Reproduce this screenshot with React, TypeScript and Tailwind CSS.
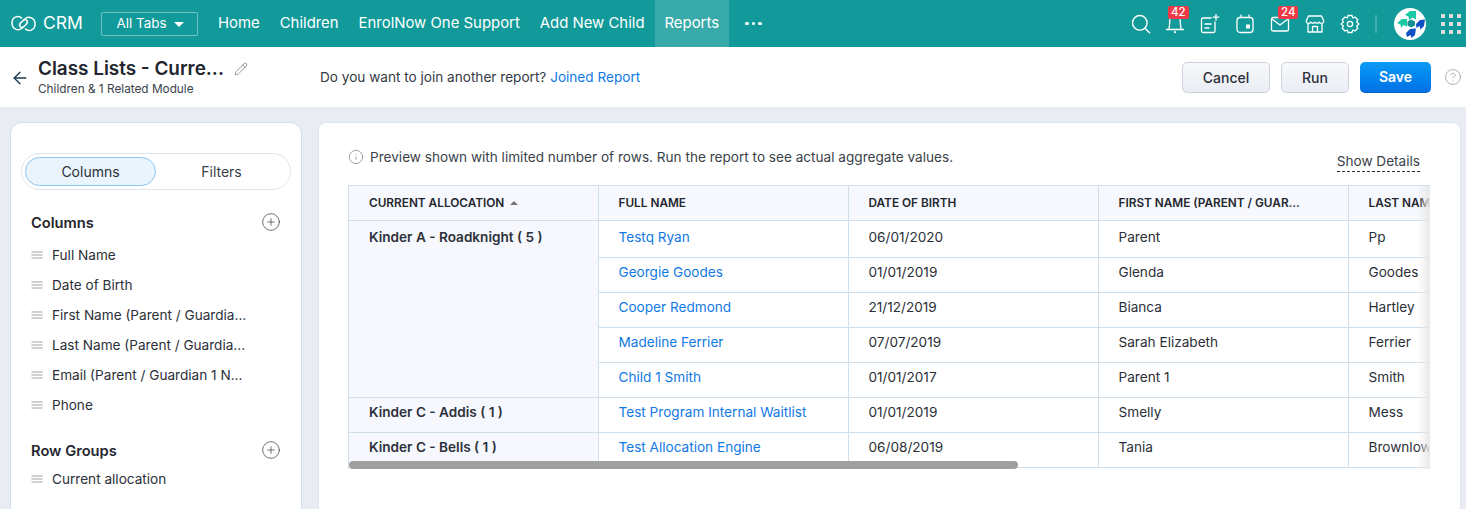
import { ArrowLeft, CirclePlus, Info, Pencil, CircleHelp } from "lucide-react";

const navLinks = ["Home", "Children", "EnrolNow One Support", "Add New Child"];
const columns = ["Full Name", "Date of Birth", "First Name (Parent / Guardia...", "Last Name (Parent / Guardia...", "Email (Parent / Guardian 1 N...", "Phone"];
const headers = ["FULL NAME", "DATE OF BIRTH", "FIRST NAME (PARENT / GUAR...", "LAST NAME"];

const rows = [
  { group: "Kinder A - Roadknight ( 5 )", span: 5, name: "Testq Ryan", dob: "06/01/2020", first: "Parent", last: "Pp" },
  { name: "Georgie Goodes", dob: "01/01/2019", first: "Glenda", last: "Goodes" },
  { name: "Cooper Redmond", dob: "21/12/2019", first: "Bianca", last: "Hartley" },
  { name: "Madeline Ferrier", dob: "07/07/2019", first: "Sarah Elizabeth", last: "Ferrier" },
  { name: "Child 1 Smith", dob: "01/01/2017", first: "Parent 1", last: "Smith" },
  { group: "Kinder C - Addis ( 1 )", span: 1, name: "Test Program Internal Waitlist", dob: "01/01/2019", first: "Smelly", last: "Mess" },
  { group: "Kinder C - Bells ( 1 )", span: 1, name: "Test Allocation Engine", dob: "06/08/2019", first: "Tania", last: "Brownlow" },
];

const CrmLogo = () => (
  <svg width="25" height="17" viewBox="0 0 25 17" fill="none" stroke="white" strokeWidth="1.5" strokeLinecap="round">
    <path d="M10.5 3 C8 0.4 1 1 1 8 C1 14.5 7.5 16 10.5 13.5 L15.5 9" />
    <path d="M14.5 14 C17 16.6 24 16 24 9 C24 2.5 17.5 1 14.5 3.5 L9.5 8" />
    <path d="M9.5 8 C7 11 10.5 14 13 11.5" />
    <path d="M15.5 9 C18 6 14.5 3 12 5.5" />
  </svg>
);

const Badge = ({ n, left }: { n: number; left: string }) => (
  <span className={`absolute -top-[8px] ${left} bg-[#ee3a46] text-white text-[11.5px] leading-[13px] px-[3px] rounded-[2px] font-medium`}>
    {n}
  </span>
);

const DragHandle = () => (
  <svg width="12" height="8" viewBox="0 0 12 8" stroke="#a3a3a3" strokeWidth="1">
    <path d="M0.5 1 H11.5 M0.5 4 H11.5 M0.5 7 H11.5" />
  </svg>
);

const TopIcons = () => (
  <div className="flex items-center text-white">
    <svg className="mr-[14px]" width="20" height="20" viewBox="0 0 20 20" fill="none" stroke="white" strokeWidth="1.4">
      <circle cx="8.8" cy="8.8" r="7.3" />
      <path d="M14 14.2 L18.6 18.8" strokeLinecap="round" />
    </svg>
    <div className="relative mr-[15px] w-[20px] h-[20px]">
      <svg width="20" height="20" viewBox="0 0 20 20" fill="none" stroke="white" strokeWidth="1.3">
        <path d="M4 15 C4.6 12 4.6 8 5 4 H15 C15.4 8 15.4 12 16 15" />
        <path d="M1.5 15.5 H18.5" strokeLinecap="round" />
        <path d="M9 18.2 H11" strokeWidth="1.8" />
      </svg>
      <Badge n={42} left="left-[3px]" />
    </div>
    <svg className="mr-[15px]" width="20" height="20" viewBox="0 0 20 20" fill="none" stroke="white" strokeWidth="1.3" strokeLinecap="round">
      <path d="M11 4 H3 A1.5 1.5 0 0 0 1.5 5.5 V17 A1.5 1.5 0 0 0 3 18.5 H13.5 A1.5 1.5 0 0 0 15 17 V8" />
      <path d="M5 10 H11 M5 14 H9" />
      <path d="M16 0.5 V6 M13.2 3.2 H18.8" />
    </svg>
    <svg className="mr-[15px]" width="20" height="20" viewBox="0 0 20 20" fill="none" stroke="white" strokeWidth="1.3" strokeLinecap="round">
      <rect x="2" y="3.5" width="16" height="15" rx="3" />
      <path d="M6 1.2 V3.5 M14 1.2 V3.5" />
      <rect x="11" y="10.5" width="4" height="4" rx="0.6" fill="white" stroke="none" />
    </svg>
    <div className="relative mr-[15px] w-[20px] h-[20px]">
      <svg width="20" height="20" viewBox="0 0 20 20" fill="none" stroke="white" strokeWidth="1.3" strokeLinejoin="round">
        <rect x="1.5" y="3.5" width="17" height="13.5" rx="1.6" />
        <path d="M2 5 L10 11 L18 5" />
      </svg>
      <Badge n={24} left="left-[8px]" />
    </div>
    <svg className="mr-[15px]" width="20" height="20" viewBox="0 0 20 20" fill="none" stroke="white" strokeWidth="1.3" strokeLinejoin="round">
      <path d="M3.5 2 H16.5 L18.8 7 A2.4 2.4 0 0 1 14.2 8 A2.4 2.4 0 0 1 10 8 A2.4 2.4 0 0 1 5.8 8 A2.4 2.4 0 0 1 1.2 7 Z" />
      <path d="M3 10 V18 H17 V10" />
      <path d="M7.5 18 V12.5 H12.5 V18" />
    </svg>
    <svg className="mr-[15px]" width="20" height="20" viewBox="0 0 20 20" fill="none" stroke="white" strokeWidth="1.3" strokeLinejoin="round">
      <path d="M8 1.5 H12 L12.8 4 L15 3 L17.8 5.8 L16.6 8 L19 10 L16.6 12 L17.8 14.2 L15 17 L12.8 16 L12 18.5 H8 L7.2 16 L5 17 L2.2 14.2 L3.4 12 L1 10 L3.4 8 L2.2 5.8 L5 3 L7.2 4 Z" />
      <circle cx="10" cy="10" r="2.6" />
    </svg>
    <div className="w-[2px] h-[18px] bg-white/20 mr-[17px]" />
    <div className="w-[32px] h-[32px] rounded-full bg-white mr-[15px] flex items-center justify-center">
      {/* pennant marks */}
      <svg width="32" height="32" viewBox="0 0 32 32">
        <path d="M11 7 L16 3 H22 V11.5 L18.5 9.5 L15 12 L14.5 8.5 Z" fill="#19c9a3" />
        <path d="M3 15 L8 11 H13 V18.5 L9.5 17 L7 20 L6.5 16.5 Z" fill="#19c9a3" />
        <path d="M13.5 13.5 L17 11.5 L21 13.5 V17.5 L17 19.5 L13.5 17.5 Z" fill="#15908f" />
        <path d="M22 16 L26 12 L31 11.5 L30 18 L26.5 21.5 L25.5 18 L22.5 20 Z" fill="#0f50c4" />
        <path d="M12 25 L16 21 L22 20.5 L21 27 L17.5 30 L16.5 27 L13 29 Z" fill="#0f50c4" />
      </svg>
    </div>
    <div className="grid grid-cols-3 gap-[4px]">
      {Array.from({ length: 9 }).map((_, i) => (
        <span key={i} className="w-[4px] h-[4px] bg-[#dcdcdc]" />
      ))}
    </div>
  </div>
);

export default function App() {
  return (
    <div className="h-[509px] overflow-hidden bg-[#e9edf3] text-[#22262f] font-['Inter','Noto_Sans',sans-serif]">
      <header className="h-[47px] bg-[#119a99] flex items-center justify-between pr-[5px] text-white">
        <div className="flex items-center h-full">
          <div className="flex items-center pl-[11px] w-[101px] gap-[7px]">
            <CrmLogo />
            <span className="text-[17.5px]">CRM</span>
          </div>
          <button className="w-[97px] h-[24px] border border-white/40 rounded-[2px] flex items-center justify-center gap-[8px] text-[13.4px] leading-[20px] pl-[2px]">
            <span className="-mt-[1px]">All Tabs</span>
            <span className="w-0 h-0 border-x-[5px] border-x-transparent border-t-[5px] border-t-white mt-[1px]" />
          </button>
          <nav className="flex items-center h-full ml-[10px] text-[14.9px]">
            {navLinks.map((l) => (
              <a key={l} className="px-[10px]">{l}</a>
            ))}
            <a className="px-[10px] h-full flex items-center bg-[#38aaa9]">Reports</a>
            <span className="ml-[16px] flex gap-[3px]">
              <i className="w-[3.5px] h-[3.5px] rounded-full bg-white" />
              <i className="w-[3.5px] h-[3.5px] rounded-full bg-white" />
              <i className="w-[3.5px] h-[3.5px] rounded-full bg-white" />
            </span>
          </nav>
        </div>
        <TopIcons />
      </header>

      <div className="h-[60px] bg-white flex items-center pl-[10px] pr-[4px]">
        <ArrowLeft size={20} strokeWidth={1.6} className="text-[#1b3a4f] mr-[8px] mt-[1px]" />
        <div className="w-[282px]">
          <div className="flex items-center gap-[10px] h-[22px]">
            <span className="text-[18.9px] font-semibold leading-[24px] text-[#23262e]">Class Lists - Curre...</span>
            <Pencil size={14} strokeWidth={1.3} className="text-[#777]" />
          </div>
          <div className="text-[11.8px] leading-[16px] text-[#3a3f4a] mt-[1px]">Children &amp; 1 Related Module</div>
        </div>
        <div className="text-[13.6px] flex-1 text-[#333a45]">
          Do you want to join another report? <a className="text-[#1179e6]">Joined Report</a>
        </div>
        <button className="w-[88px] h-[31px] rounded-[5px] border border-[#cdd2dd] bg-gradient-to-b from-[#f8f9fb] to-[#e9ecf3] text-[14px] font-medium text-[#2d313b]">Cancel</button>
        <button className="w-[68px] h-[31px] ml-[11px] rounded-[5px] border border-[#cdd2dd] bg-gradient-to-b from-[#f8f9fb] to-[#e9ecf3] text-[14px] font-medium text-[#2d313b]">Run</button>
        <button className="w-[71px] h-[31px] ml-[11px] rounded-[5px] bg-gradient-to-b from-[#0d9bf5] to-[#0470e6] border-b border-[#0563c8] text-[14px] font-semibold text-white">Save</button>
        <CircleHelp size={18} strokeWidth={1} className="text-[#9a9a9a] ml-[13px]" />
      </div>

      <main className="flex gap-[16px] pt-[15px] pl-[10px] pr-[5px]">
        <aside className="w-[292px] h-[420px] bg-white border border-[#cfe0ef] rounded-[12px] pt-[30px] px-[10px]">
          <div className="h-[37px] rounded-full border border-[#dfe5ee] flex items-center p-[3px]">
            <div className="w-[131px] h-[29px] rounded-full bg-[#e9f4fd] border border-[#8cc6f1] flex items-center justify-center text-[14px] text-[#2b2f38]">Columns</div>
            <div className="w-[131px] text-center text-[14px] text-[#3a3f4a]">Filters</div>
          </div>
          <div className="flex items-center justify-between mt-[21px] pl-[10px] pr-[10px] h-[24px]">
            <span className="text-[14.7px] font-semibold text-[#23262e]">Columns</span>
            <CirclePlus size={20} strokeWidth={0.9} className="text-[#444] -mt-[2px]" />
          </div>
          <ul className="mt-[5px] pl-[10px]">
            {columns.map((c) => (
              <li key={c} className="h-[30px] flex items-center gap-[9px] text-[13.6px] text-[#2b2f38]">
                <DragHandle />
                {c}
              </li>
            ))}
          </ul>
          <div className="flex items-center justify-between mt-[19px] pl-[10px] pr-[10px] h-[24px]">
            <span className="text-[14.7px] font-semibold text-[#23262e]">Row Groups</span>
            <CirclePlus size={20} strokeWidth={0.9} className="text-[#444] -mt-[2px]" />
          </div>
          <div className="pl-[10px] mt-[1px] h-[30px] flex items-center gap-[9px] text-[13.6px] text-[#2b2f38]">
            <DragHandle />
            Current allocation
          </div>
        </aside>

        <section className="flex-1 h-[420px] bg-white border border-[#dde6ef] rounded-[8px] pl-[29px] pr-[30px]">
          <div className="h-[62px] flex justify-between">
            <div className="flex items-center gap-[6px] h-[16px] mt-[26px] text-[13.6px] text-[#3a3f4a]">
              <Info size={16} strokeWidth={1} className="text-[#777]" />
              Preview shown with limited number of rows. Run the report to see actual aggregate values.
            </div>
            <span className="h-[21px] mt-[28px] mr-[10px] text-[13.6px] leading-[20px] text-[#3a3f4a] border-b border-dashed border-[#333]">Show Details</span>
          </div>
          <div className="relative w-[1082px] h-[284px] overflow-hidden border-l border-t border-[#cfe0ec]">
            <table className="w-[1348px] table-fixed border-collapse text-[13.6px]">
              <colgroup>
                <col className="w-[249px]" />
                <col className="w-[250px]" />
                <col className="w-[250px]" />
                <col className="w-[250px]" />
                <col className="w-[349px]" />
              </colgroup>
              <thead>
                <tr className="h-[34px] bg-[#f6f8fe] border-b border-[#cfe0ec]">
                  <th className="pl-[20px] pt-[2px] text-left text-[11.8px] font-semibold text-[#23262e] border-r border-[#cfe0ec]">
                    CURRENT ALLOCATION
                    <span className="inline-block ml-[6px] mb-[2px] w-0 h-0 border-x-[4px] border-x-transparent border-b-[4px] border-b-[#777]" />
                  </th>
                  {headers.map((h) => (
                    <th key={h} className="pl-[20px] pt-[2px] text-left text-[11.8px] font-semibold text-[#23262e] border-r border-[#cfe0ec] whitespace-nowrap">{h}</th>
                  ))}
                </tr>
              </thead>
              <tbody>
                {rows.map((r, i) => {
                  const cell = i === 0 ? "align-top pt-[6px] pl-[20px] leading-[20px]" : "align-top pt-[4px] pl-[20px] leading-[20px]";
                  return (
                    <tr key={r.name} className={i === 0 ? "h-[37px] border-b border-[#cfe0ec]" : "h-[35px] border-b border-[#cfe0ec]"}>
                      {r.group && (
                        <td rowSpan={r.span} className={`${cell} bg-[#f6f8fe] font-semibold text-[#2d313b] border-r border-[#cfe0ec]`}>{r.group}</td>
                      )}
                      <td className={`${cell} text-[#1179e6] border-r border-[#cfe0ec]`}>{r.name}</td>
                      <td className={`${cell} text-[#2b2f38] border-r border-[#cfe0ec]`}>{r.dob}</td>
                      <td className={`${cell} text-[#2b2f38] border-r border-[#cfe0ec]`}>{r.first}</td>
                      <td className={`${cell} text-[#2b2f38]`}>{r.last}</td>
                    </tr>
                  );
                })}
              </tbody>
            </table>
            <div className="absolute top-0 right-0 bottom-0 w-[12px] bg-gradient-to-r from-transparent to-[#e8e8e8]" />
            <div className="absolute left-0 bottom-0 w-[669px] h-[8px] rounded-full bg-[#a0a0a0]" />
          </div>
        </section>
      </main>
    </div>
  );
}
